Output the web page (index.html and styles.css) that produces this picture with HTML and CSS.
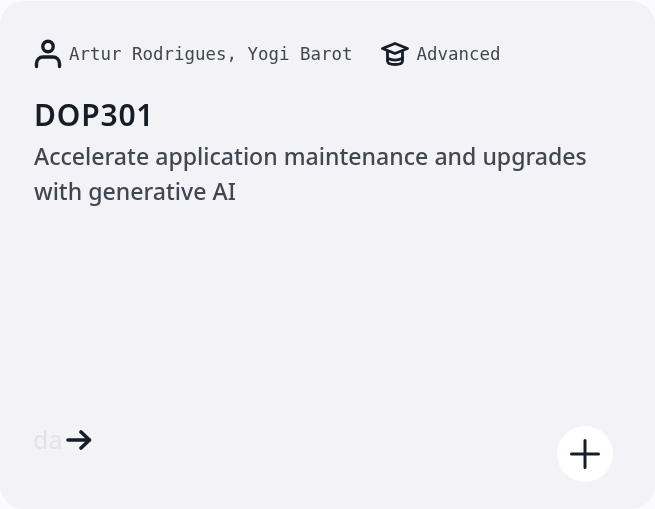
FILE: index.html
```html
<!DOCTYPE html>
<html lang="en">
<head>
<meta charset="utf-8">
<title>DOP301</title>
<link rel="stylesheet" href="styles.css">
</head>
<body>
<article class="card">
  <div class="meta">
    <div class="meta-item">
      <svg class="icon-user" viewBox="0 0 28 30" fill="none" stroke="#161d26" stroke-width="3.4" stroke-linecap="round" aria-hidden="true">
        <circle cx="14" cy="7.500" r="5.200"/>
        <path d="M2.500 27.500v-3a6.500 6.500 0 0 1 6.500-6.500h10a6.500 6.500 0 0 1 6.500 6.500v3"/>
      </svg>
      <span>Artur Rodrigues, Yogi Barot</span>
    </div>
    <div class="meta-item">
      <svg class="icon-cap" viewBox="0 0 28 24" fill="none" stroke="#161d26" stroke-width="2.800" stroke-linejoin="round" stroke-linecap="round" aria-hidden="true">
        <path d="M14 1.500 26.500 6.500 14 11.500 1.500 6.500Z"/>
        <path d="M6.500 10v9c0 2.200 3.500 3.500 7.500 3.500s7.500-1.300 7.500-3.500v-9"/>
        <path d="M7 16.500c4 1.800 10 1.800 14 0"/>
      </svg>
      <span>Advanced</span>
    </div>
  </div>
  <h2 class="title">DOP301</h2>
  <p class="desc">Accelerate application maintenance and upgrades<br>with generative AI</p>
  <div class="footer">
    <a class="link" href="#"><span class="link-text">da</span>
      <svg class="icon-arrow" viewBox="0 0 26 22" fill="none" stroke="#161d26" stroke-width="3.600" stroke-linecap="round" stroke-linejoin="round" aria-hidden="true">
        <path d="M2 11h21"/><path d="M15 3l8.500 8-8.500 8"/>
      </svg>
    </a>
    <button class="add" type="button" aria-label="Add">
      <svg class="icon-plus" viewBox="0 0 30 30" fill="none" stroke="#161d26" stroke-width="3" stroke-linecap="round" aria-hidden="true">
        <path d="M15 1.500v27"/><path d="M1.500 15h27"/>
      </svg>
    </button>
  </div>
</article>
</body>
</html>
```
FILE: styles.css
```css
html, body { margin: 0; padding: 0; background: #fbfbfd; }
body { width: 655px; height: 509px; overflow: hidden; font-family: "Noto Sans", sans-serif; }
.card {
  box-sizing: border-box;
  width: 655px;
  height: 508px;
  margin-top: 1px;
  background: #f3f3f7;
  border-radius: 24px;
  padding: 38px 42px 27px 34px;
  display: flex;
  flex-direction: column;
  filter: blur(0.35px);
}
.meta { display: flex; align-items: center; gap: 29px; height: 30px; }
.meta-item {
  display: flex;
  align-items: center;
  gap: 7px;
  font-family: "DejaVu Sans Mono", monospace;
  font-size: 17.45px;
  color: #414750;
}
.icon-user { width: 28px; height: 30px; }
.icon-cap { width: 28px; height: 24px; }
.title {
  margin: 28px 0 0;
  font-size: 30px;
  line-height: 36px;
  font-weight: 600;
  letter-spacing: 0.8px;
  color: #161d26;
}
.desc {
  margin: 6px 0 0;
  font-size: 23.1px;
  line-height: 35px;
  font-weight: 500;
  color: #414750;
}
.footer { margin-top: auto; display: flex; justify-content: space-between; align-items: flex-end; }
.link {
  display: flex;
  align-items: center;
  gap: 4px;
  text-decoration: none;
  margin-bottom: 28px;
  font-size: 25px;
  line-height: 30px;
  color: #e2e2e7;
}
.link-text { margin-left: -1px; margin-top: -1px; }
.icon-arrow { width: 26px; height: 22px; }
.add {
  width: 56px;
  height: 56px;
  border: 0;
  padding: 0;
  border-radius: 50%;
  background: #fff;
  display: flex;
  align-items: center;
  justify-content: center;
}
.icon-plus { width: 30px; height: 30px; }
```
